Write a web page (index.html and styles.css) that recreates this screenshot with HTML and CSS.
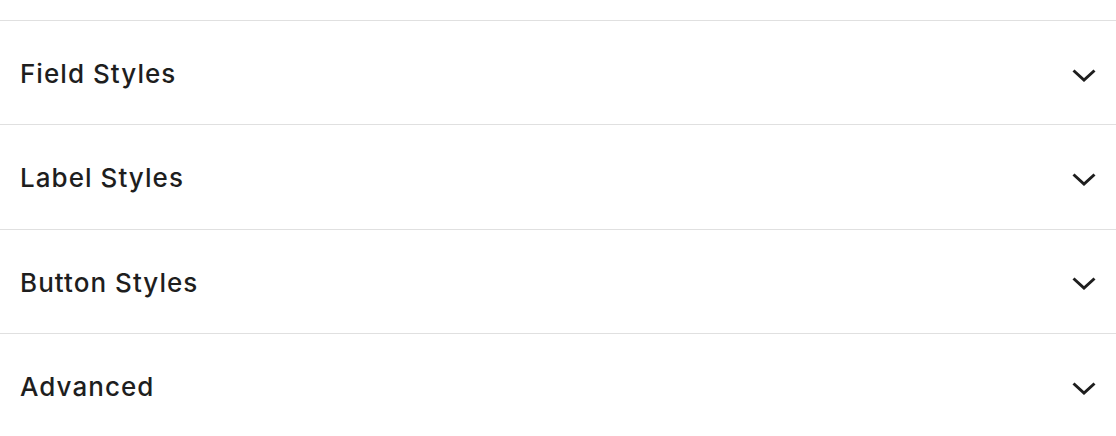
FILE: index.html
```html
<!DOCTYPE html>
<html lang="en">
<head>
  <meta charset="UTF-8">
  <meta name="viewport" content="width=device-width, initial-scale=1.0">
  <title>Painel</title>
  <link rel="stylesheet" href="styles.css">
</head>
<body>
  <div class="topo"></div>
  <div class="paineis">
    <div class="painel">
      <span class="titulo">Field Styles</span>
      <svg class="seta" viewBox="0 0 24 13" width="24" height="13"><path d="M1.5 1.5 L12 11 L22.5 1.5" fill="none" stroke="#1e1e1e" stroke-width="3"/></svg>
    </div>
    <div class="painel">
      <span class="titulo">Label Styles</span>
      <svg class="seta" viewBox="0 0 24 13" width="24" height="13"><path d="M1.5 1.5 L12 11 L22.5 1.5" fill="none" stroke="#1e1e1e" stroke-width="3"/></svg>
    </div>
    <div class="painel">
      <span class="titulo">Button Styles</span>
      <svg class="seta" viewBox="0 0 24 13" width="24" height="13"><path d="M1.5 1.5 L12 11 L22.5 1.5" fill="none" stroke="#1e1e1e" stroke-width="3"/></svg>
    </div>
    <div class="painel">
      <span class="titulo">Advanced</span>
      <svg class="seta" viewBox="0 0 24 13" width="24" height="13"><path d="M1.5 1.5 L12 11 L22.5 1.5" fill="none" stroke="#1e1e1e" stroke-width="3"/></svg>
    </div>
  </div>
</body>
</html>
```

FILE: styles.css
```css
* {
  box-sizing: border-box;
  margin: 0;
}

body {
  background-color: white;
  color: #1e1e1e;
  font-family: Inter, "Noto Sans", sans-serif;
  overflow: hidden;
}

.topo {
  height: 20px;
}

.painel {
  height: 104.33px;
  border-top: 1px solid #e0e0e0;
  display: flex;
  align-items: center;
  justify-content: space-between;
  padding: 0 20px 0 20px;
}

.titulo {
  font-size: 26px;
  font-weight: 500;
  letter-spacing: 1.05px;
  padding-top: 2px;
}

.seta {
  margin-top: 5px;
}
```
